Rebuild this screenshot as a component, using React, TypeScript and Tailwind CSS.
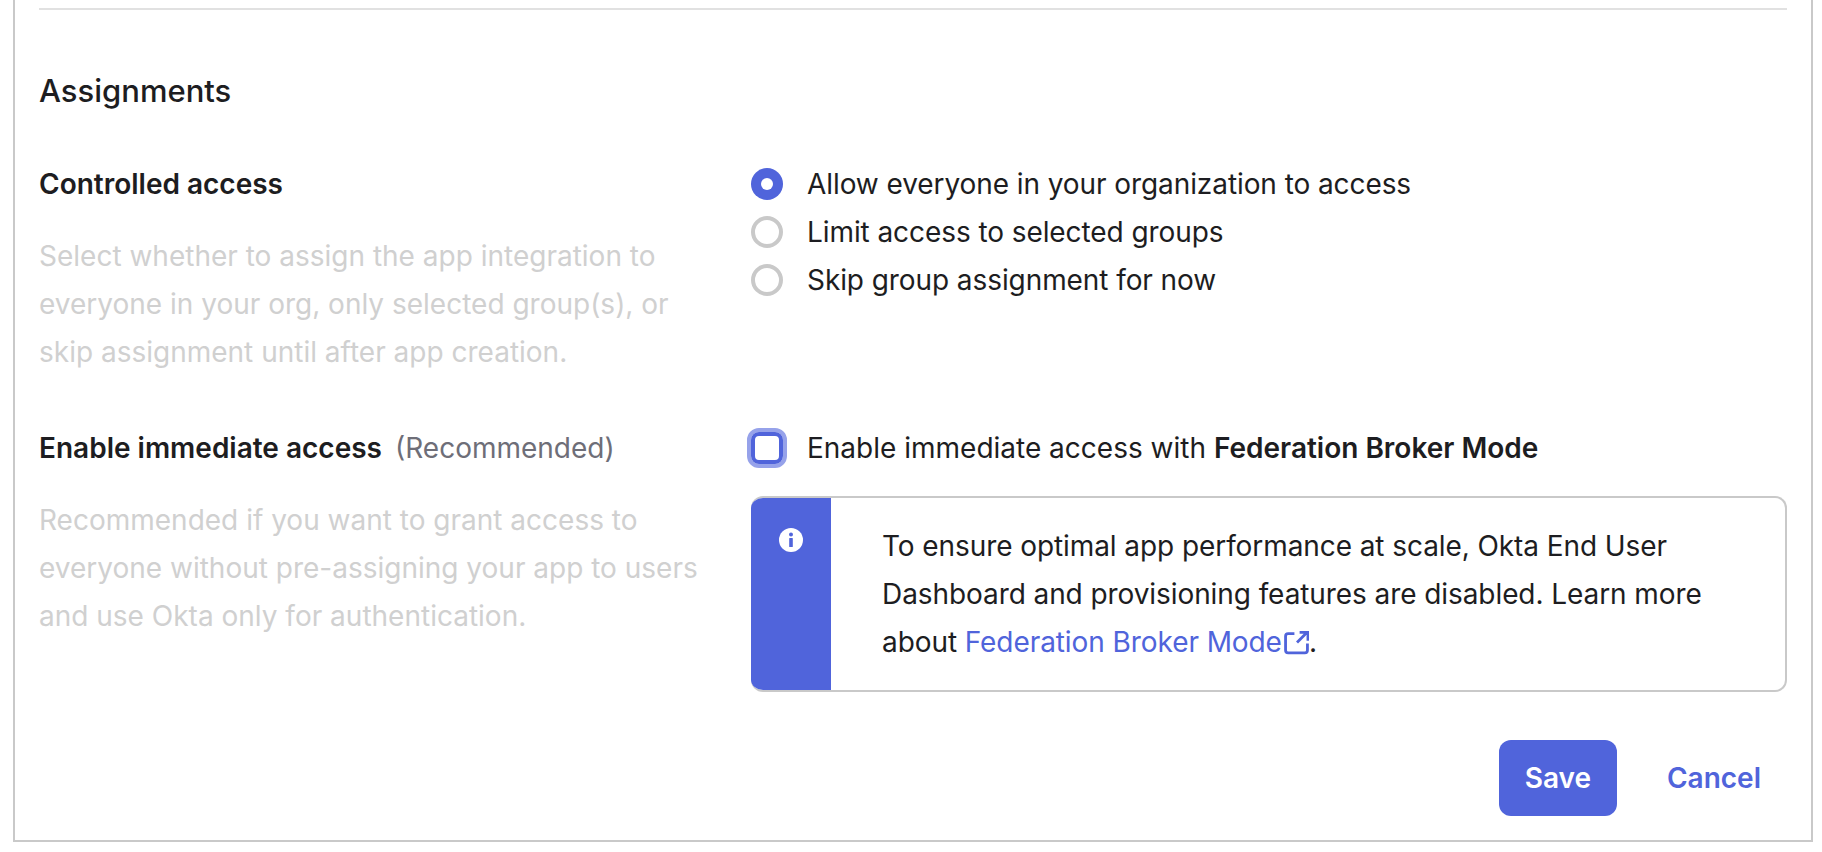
const BLUE = "bg-[#5064db]";

function Radio({ checked, label }: { checked?: boolean; label: string }) {
  return (
    <label className="flex h-12 items-center">
      {checked ? (
        <span className={`flex h-8 w-8 items-center justify-center rounded-full ${BLUE}`}>
          <span className="h-3 w-3 rounded-full bg-white" />
        </span>
      ) : (
        <span className="h-8 w-8 rounded-full border-[4px] border-[#c9c9c9] bg-white" />
      )}
      <span className="ml-6 tracking-[-0.08px]">{label}</span>
    </label>
  );
}

function InfoIcon() {
  return (
    <svg width="24" height="24" viewBox="0 0 24 24" aria-hidden="true">
      <circle cx="12" cy="12" r="12" fill="#fff" />
      <circle cx="12" cy="6.6" r="2" fill="#5064db" />
      <rect x="10.2" y="10" width="3.6" height="9" rx="0.6" fill="#5064db" />
    </svg>
  );
}

function ExternalIcon() {
  return (
    <svg className="ml-0.5 inline-block align-[-3px]" width="25" height="25" viewBox="0 0 24 24" fill="none" stroke="#5064db" strokeWidth="2.7" aria-hidden="true">
      <path d="M10 3.5H4a2.5 2.5 0 0 0-2.5 2.5v13.5A2.5 2.5 0 0 0 4 22h16a2.5 2.5 0 0 0 2.5-2.5V13" />
      <path d="M12.5 12 22 2.5M15 2.3h8v8" />
    </svg>
  );
}

export default function App() {
  return (
    <div className="h-[852px] w-[1822px] overflow-hidden bg-white font-['Inter',sans-serif] text-[28px] leading-[48px] text-[#1d1d21]">
      <div className="ml-[13px] h-[842px] w-[1800px] border-x-2 border-b-2 border-[#c9c9c9] px-6 pt-2">
        <div className="border-t-2 border-[#e1e1e1]" />

        <h2 className="mt-[61px] text-[31px] font-medium leading-[40px]">Assignments</h2>

        <div className="mt-[49px] flex">
          <div className="w-[712px] shrink-0">
            <div className="font-semibold">Controlled access</div>
            <p className="mt-6 w-[668px] text-[#d0d0d0]">
              Select whether to assign the app integration to everyone in your org, only selected group(s), or skip assignment until after app creation.
            </p>
          </div>
          <div>
            <Radio checked label="Allow everyone in your organization to access" />
            <Radio label="Limit access to selected groups" />
            <Radio label="Skip group assignment for now" />
          </div>
        </div>

        <div className="mt-12 flex">
          <div className="w-[712px] shrink-0">
            <div>
              <span className="font-semibold">Enable immediate access</span>
              <span className="ml-[13px] text-[#6e6e78]">(Recommended)</span>
            </div>
            <p className="mt-6 w-[668px] text-[#d0d0d0]">
              Recommended if you want to grant access to everyone without pre-assigning your app to users and use Okta only for authentication.
            </p>
          </div>
          <div className="min-w-0 flex-1">
            <label className="flex h-12 items-center">
              <span className="-ml-1 h-10 w-10 rounded-[12px] border-[4px] border-[#96a2ea] bg-white">
                <span className="block h-8 w-8 rounded-[8px] border-[4px] border-[#5064db]" />
              </span>
              <span className="ml-5">
                Enable immediate access with <span className="font-semibold">Federation Broker Mode</span>
              </span>
            </label>
            <div className="mt-6 flex h-[196px] overflow-hidden rounded-[12px] border-2 border-l-0 border-[#c9c9c9]">
              <div className={`flex w-20 shrink-0 justify-center pt-[30px] ${BLUE}`}>
                <InfoIcon />
              </div>
              <p className="w-[912px] pl-[51px] pt-6 tracking-[-0.08px]">
                To ensure optimal app performance at scale, Okta End User Dashboard and provisioning features are disabled. Learn more about{" "}
                <a className="text-[#5064db]">
                  Federation Broker Mode
                  <ExternalIcon />
                </a>
                .
              </p>
            </div>
            <div className="mt-12 flex items-center justify-end pr-[26px]">
              <button className={`h-[76px] w-[118px] rounded-[12px] font-semibold text-white ${BLUE}`}>Save</button>
              <button className="ml-[50px] font-semibold text-[#5064db]">Cancel</button>
            </div>
          </div>
        </div>
      </div>
    </div>
  );
}
